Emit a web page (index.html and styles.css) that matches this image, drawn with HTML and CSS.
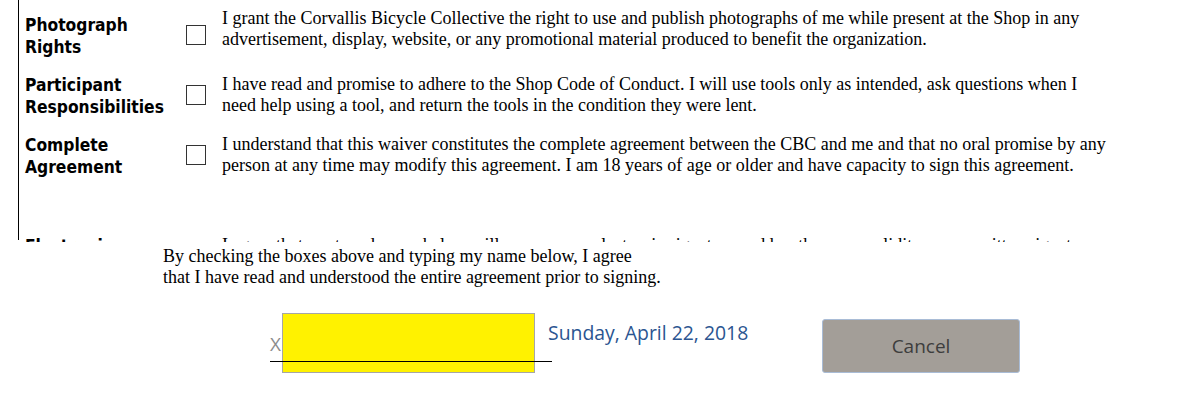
FILE: index.html
```html
<!DOCTYPE html>
<html lang="en">
<head>
<meta charset="utf-8">
<title>Waiver</title>
<link rel="stylesheet" href="styles.css">
</head>
<body>
<div class="waiver">
  <div class="term">
    <div class="term-label">Photograph<br>Rights</div>
    <span class="check"></span>
    <p class="term-text term-text--raised">I grant the Corvallis Bicycle Collective the right to use and publish photographs of me while present at the Shop in any<br>advertisement, display, website, or any promotional material produced to benefit the organization.</p>
  </div>
  <div class="term">
    <div class="term-label">Participant<br>Responsibilities</div>
    <span class="check"></span>
    <p class="term-text">I have read and promise to adhere to the Shop Code of Conduct. I will use tools only as intended, ask questions when I<br>need help using a tool, and return the tools in the condition they were lent.</p>
  </div>
  <div class="term term--tall">
    <div class="term-label">Complete<br>Agreement</div>
    <span class="check"></span>
    <p class="term-text">I understand that this waiver constitutes the complete agreement between the CBC and me and that no oral promise by any<br>person at any time may modify this agreement. I am 18 years of age or older and have capacity to sign this agreement.</p>
  </div>
  <div class="term">
    <div class="term-label">Electronic<br>Signature</div>
    <span class="check"></span>
    <p class="term-text">I agree that my typed name below will serve as my electronic signature and has the same validity as my written signature.</p>
  </div>
</div>
<p class="consent">By checking the boxes above and typing my name below, I agree<br>that I have read and understood the entire agreement prior to signing.</p>
<div class="sign-row">
  <div class="signature">
    <span class="sig-x">X</span>
    <div class="sig-field"></div>
  </div>
  <div class="sig-date">Sunday, April 22, 2018</div>
  <button class="cancel" type="button">Cancel</button>
</div>
</body>
</html>
```
FILE: styles.css
```css
* {
  box-sizing: border-box;
}

body {
  margin: 0;
  background: #ffffff;
  color: #000000;
  font-family: "Liberation Serif", "Times New Roman", serif;
}

.waiver {
  height: 242px;
  overflow: hidden;
  background: linear-gradient(#000000, #000000) no-repeat 18px 0 / 1px 240px;
}

.term {
  display: flex;
  align-items: flex-start;
  height: 60px;
  padding-left: 25px;
}

.term--tall {
  height: 101px;
}

.term-label {
  flex: none;
  width: 161px;
  margin-top: 14px;
  font-family: "DejaVu Sans Condensed", "Liberation Sans", sans-serif;
  font-weight: bold;
  font-size: 17.3px;
  line-height: 22px;
}

.check {
  flex: none;
  width: 20px;
  height: 20px;
  margin-top: 25px;
  margin-right: 16px;
  border: 1px solid #333333;
  background: #ffffff;
}

.term-text {
  margin: 14px 0 0;
  font-size: 18px;
  line-height: 21px;
  white-space: nowrap;
}

.term-text--raised {
  margin-top: 8px;
}

.consent {
  margin: 0;
  padding: 4px 0 0 163px;
  font-size: 18px;
  line-height: 21px;
}

.sign-row {
  display: flex;
  align-items: flex-start;
  margin-top: 25px;
  padding-left: 270px;
  font-family: "Open Sans", "Liberation Sans", sans-serif;
}

.signature {
  position: relative;
  display: flex;
  align-items: flex-start;
}

.signature::after {
  content: "";
  position: absolute;
  left: 0;
  top: 48px;
  width: 282px;
  height: 1px;
  background: #000000;
}

.sig-x {
  width: 12px;
  margin-top: 19px;
  font-size: 19px;
  line-height: 24px;
  color: #8c8c8c;
}

.sig-field {
  width: 253px;
  height: 60px;
  background: #fff200;
  border: 1px solid #a6a6a6;
}

.sig-date {
  flex: none;
  width: 274px;
  margin-left: 13px;
  margin-top: 8px;
  font-size: 19.4px;
  line-height: 24px;
  color: #2b5591;
}

.cancel {
  display: flex;
  align-items: center;
  justify-content: center;
  width: 198px;
  height: 54px;
  margin-top: 6px;
  padding: 0;
  background: #a39e98;
  border: 1px solid #a9bcd6;
  border-radius: 3px;
  font-family: "Open Sans", "Liberation Sans", sans-serif;
  font-size: 19px;
  color: #3d3d3d;
}
```
